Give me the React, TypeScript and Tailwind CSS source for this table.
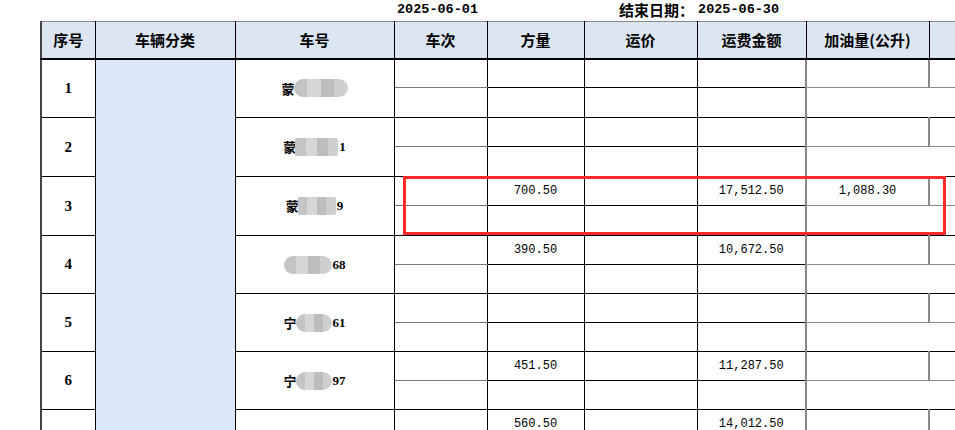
import { Fragment } from "react";

interface Row {
  n: number;
  pre: string;
  post: string;
  blob: number;
  pill: boolean;
  vol?: string;
  fee?: string;
  oil?: string;
}

const rows: Row[] = [
  { n: 1, pre: "蒙", post: "", blob: 54, pill: true },
  { n: 2, pre: "蒙", post: "1", blob: 43, pill: false },
  { n: 3, pre: "蒙", post: "9", blob: 38, pill: false, vol: "700.50", fee: "17,512.50", oil: "1,088.30" },
  { n: 4, pre: "", post: "68", blob: 48, pill: true, vol: "390.50", fee: "10,672.50" },
  { n: 5, pre: "宁", post: "61", blob: 36, pill: true },
  { n: 6, pre: "宁", post: "97", blob: 36, pill: true, vol: "451.50", fee: "11,287.50" },
  { n: 7, pre: "", post: "", blob: 0, pill: false, vol: "560.50", fee: "14,012.50" },
];

const cjk = { fontFamily: '"Noto Sans CJK SC", "Noto Sans", sans-serif' };
const mono = { fontFamily: '"Liberation Mono", "Noto Sans CJK SC", monospace' };
const serif = { fontFamily: '"Liberation Serif", "Noto Sans CJK SC", serif' };

function Plate({ row }: { row: Row }) {
  if (!row.blob) return null;
  return (
    <div className="flex items-center justify-center font-bold text-[13px] text-black" style={serif}>
      {row.pre && (
        <span className="text-[13px] -mr-[1px]" style={cjk}>
          {row.pre}
        </span>
      )}
      <span
        className={`flex h-[18px] overflow-hidden ${row.pill ? "rounded-full" : "rounded-[2px]"}`}
        style={{ width: row.blob }}
      >
        <span className="flex-1 bg-[#c4c4c4]" />
        <span className="flex-1 bg-[#d6d6d6]" />
        <span className="flex-1 bg-[#bdbdbd]" />
        <span className="flex-1 bg-[#cfcfcf]" />
      </span>
      {row.post && <span className="ml-[1px]">{row.post}</span>}
    </div>
  );
}

export default function App() {
  const th = "border border-black font-bold text-[15px] text-black text-center";
  const td = "border border-black text-[12px] text-black text-center p-0";

  return (
    <div className="relative w-[955px] h-[430px] overflow-hidden bg-white">
      {/* date line */}
      <div className="h-[21px] flex items-center font-bold text-black">
        <span className="ml-[397px] text-[13.5px]" style={mono}>
          2025-06-01
        </span>
        <span className="ml-[141px] text-[15px]" style={cjk}>
          结束日期：
        </span>
        <span className="ml-[4px] text-[13.5px]" style={mono}>
          2025-06-30
        </span>
      </div>

      <table className="ml-[40px] border-collapse table-fixed w-[948px] border-l-2 border-l-[#444]">
        <colgroup>
          <col className="w-[54px]" />
          <col className="w-[140px]" />
          <col className="w-[159px]" />
          <col className="w-[93px]" />
          <col className="w-[97px]" />
          <col className="w-[113px]" />
          <col className="w-[109px]" />
          <col className="w-[123px]" />
          <col className="w-[60px]" />
        </colgroup>
        <thead>
          <tr className="h-[37px] bg-[#dce6f2]" style={cjk}>
            <th className={`${th} border-t-[#888] border-b-2 border-l-2 border-l-[#444]`}>序号</th>
            <th className={`${th} border-t-[#888] border-b-2`}>车辆分类</th>
            <th className={`${th} border-t-[#888] border-b-2`}>车号</th>
            <th className={`${th} border-t-[#888] border-b-2`}>车次</th>
            <th className={`${th} border-t-[#888] border-b-2`}>方量</th>
            <th className={`${th} border-t-[#888] border-b-2`}>运价</th>
            <th className={`${th} border-t-[#888] border-b-2`}>运费金额</th>
            <th className={`${th} border-t-[#888] border-b-2`}>加油量(公升)</th>
            <th className={`${th} border-t-[#888] border-b-2 border-l-[#777]`}></th>
          </tr>
        </thead>
        <tbody>
          {rows.map((r, i) => (
            <Fragment key={r.n}>
              <tr className="h-[29px]">
                <td
                  rowSpan={2}
                  className={`${td} text-[15px] font-bold border-l-2 border-l-[#444]`}
                  style={serif}
                >
                  {/* last row is cut off by the window */}
                  {r.n < 7 ? r.n : ""}
                </td>
                {i === 0 && <td rowSpan={14} className={`${td} bg-[#dbe7f6]`} />}
                <td rowSpan={2} className={td}>
                  <Plate row={r} />
                </td>
                <td className={`${td} border-b-[#777]`} />
                <td className={td} style={mono}>
                  {r.vol}
                </td>
                <td className={td} />
                <td className={td} style={mono}>
                  {r.fee}
                </td>
                <td className={`${td} border-l-2 border-l-[#888] border-b-[#888]`} style={mono}>
                  {r.oil}
                </td>
                <td className={`${td} border-l-2 border-l-[#888] border-b-[#888]`} />
              </tr>
              <tr className={i < 3 ? "h-[30px]" : "h-[29px]"}>
                <td className={td} />
                <td className={td} />
                <td className={td} />
                <td className={td} />
                <td colSpan={2} className={`${td} border-l-2 border-l-[#888]`} />
              </tr>
            </Fragment>
          ))}
        </tbody>
      </table>

      {/* highlight box */}
      <div className="absolute left-[403px] top-[176px] w-[543px] h-[59px] border-[3px] border-[#ff2a2a]" />
    </div>
  );
}
